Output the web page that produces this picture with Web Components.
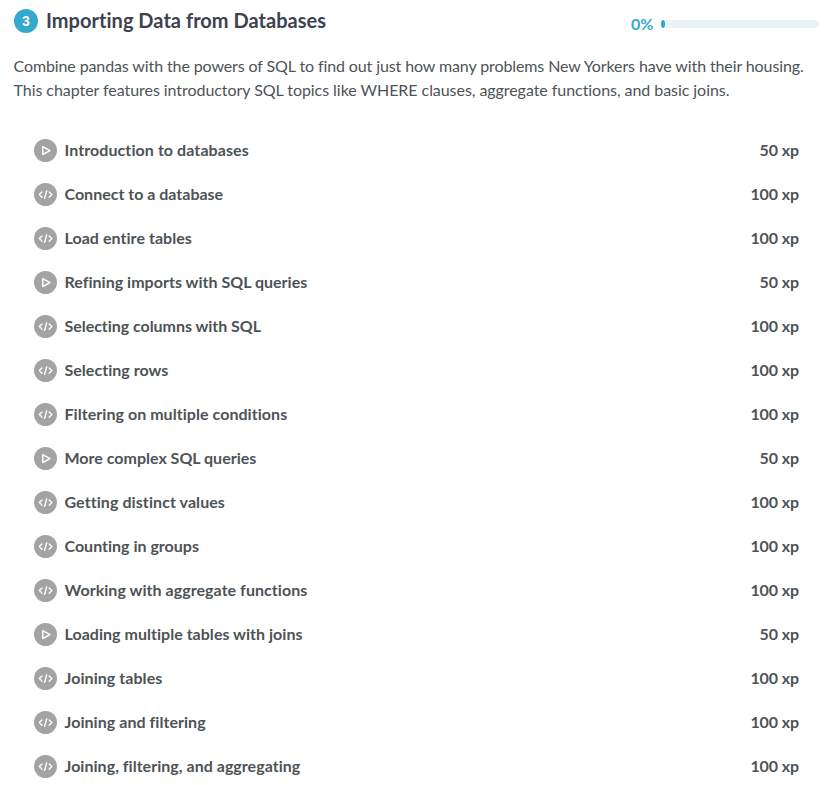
<!DOCTYPE html>
<html lang="en"><head><meta charset="utf-8"><title>Importing Data from Databases</title>
<style>body{margin:0;background:#fff;font-family:Lato,sans-serif;color:#4d5356;font-variant-ligatures:none}</style></head>
<body><course-chapter></course-chapter>
<script>
class ChapterHeader extends HTMLElement{
 connectedCallback(){
  this.attachShadow({mode:'open'}).innerHTML=`<style>
:host{display:flex;align-items:center;height:42px;padding:0 9px 0 14px;justify-content:space-between}
.title{display:flex;align-items:center;gap:8px}
.num{width:24px;height:24px;border-radius:50%;background:#33aacc;color:#fff;font:bold 14px/24px "Liberation Sans",sans-serif;text-align:center}
h4{margin:-2px 0 0;font-size:20px;line-height:24px;font-weight:bold;letter-spacing:.03px;color:#3d4251}
.progress{display:flex;align-items:center;gap:7.5px;padding-top:6px;color:#33aacc;font-size:16px;line-height:20px;font-weight:bold}
.bar{width:158px;height:8px;border-radius:4px;background:#e8f3f5}
.fill{width:4px;height:8px;border-radius:2px/4px;background:#33aacc}
</style><div class="title"><span class="num">${this.getAttribute('number')}</span><h4><slot></slot></h4></div>
<div class="progress"><span>0%</span><div class="bar"><div class="fill"></div></div></div>`;
 }}
class ExerciseRow extends HTMLElement{
 connectedCallback(){
  const video=this.getAttribute('kind')==='video';
  const icon=video?'<path d="M8.8 7.7v7.8l7.2-3.9z" stroke-width="1.5"/>':'<path d="M8 9 5.4 11.6l2.6 2.6M15.2 9l2.6 2.6-2.6 2.6M12.7 7.9l-2.1 7.4" stroke-width="1.4"/>';
  this.attachShadow({mode:'open'}).innerHTML=`<style>
:host{display:flex;align-items:center;height:44px;font-size:16px;line-height:24px;font-weight:bold;color:#4d5356}
svg{width:23px;height:23px;margin-right:7.5px;flex:none}
.name{flex:1;letter-spacing:${this.getAttribute('tracking')}px}
.xp{letter-spacing:-.1px}
</style><svg viewBox="0 0 23 23"><circle cx="11.5" cy="11.5" r="11.5" fill="#a3a3a3"/><g fill="none" stroke="#fff" stroke-linecap="round" stroke-linejoin="round">${icon}</g></svg><span class="name"><slot></slot></span><span class="xp">${video?50:100} xp</span>`;
 }}
class CourseChapter extends HTMLElement{
 connectedCallback(){
  const rows=[['v','Introduction to databases',.08],['c','Connect to a database',0],['c','Load entire tables',.05],['v','Refining imports with SQL queries',.02],['c','Selecting columns with SQL',-.04],['c','Selecting rows',.03],['c','Filtering on multiple conditions',.05],['v','More complex SQL queries',0],['c','Getting distinct values',.08],['c','Counting in groups',0],['c','Working with aggregate functions',.05],['v','Loading multiple tables with joins',.03],['c','Joining tables',.06],['c','Joining and filtering',.05],['c','Joining, filtering, and aggregating',.03]];
  this.attachShadow({mode:'open'}).innerHTML=`<style>
:host{display:block;height:785px;overflow:hidden}
p{margin:12px 13.5px 26px;font-size:16px;line-height:24px;white-space:nowrap}
.first{letter-spacing:-.11px}.second{letter-spacing:-.053px}
.list{padding:0 29px 0 34px}
</style><chapter-header number="3">Importing Data from Databases</chapter-header>
<p><span class="first">Combine pandas with the powers of SQL to find out just how many problems New Yorkers have with their housing.</span><br><span class="second">This chapter features introductory SQL topics like WHERE clauses, aggregate functions, and basic joins.</span></p>
<div class="list">${rows.map(([k,t,s])=>`<exercise-row kind="${k==='v'?'video':'code'}" tracking="${s}">${t}</exercise-row>`).join('')}</div>`;
 }}
customElements.define('chapter-header',ChapterHeader);
customElements.define('exercise-row',ExerciseRow);
customElements.define('course-chapter',CourseChapter);
</script></body></html>
